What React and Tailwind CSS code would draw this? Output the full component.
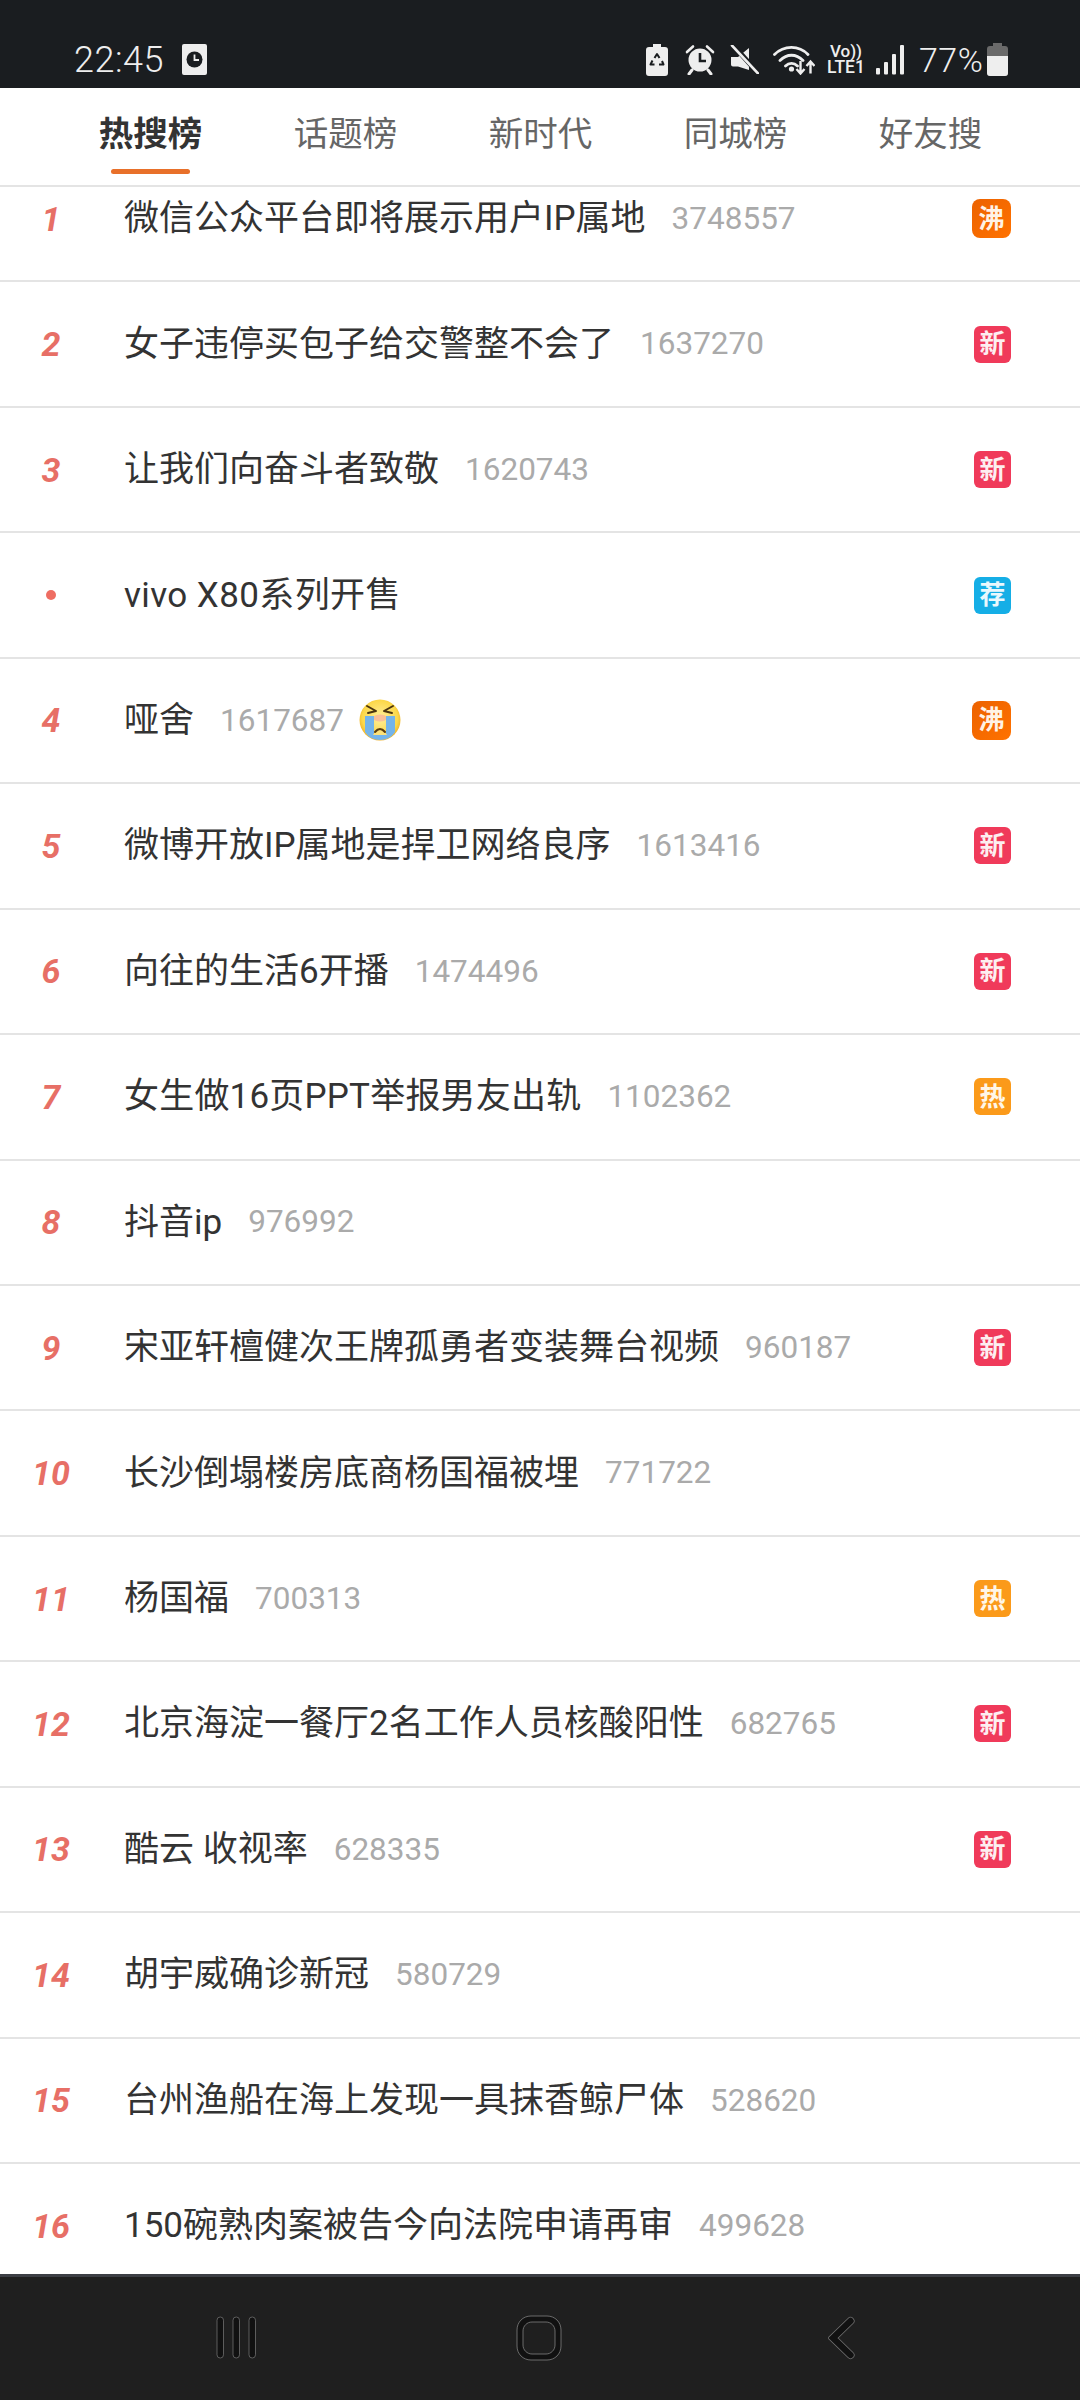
const CJK = '"Roboto","Noto Sans CJK SC",sans-serif';

const rows = [
  ["1", "微信公众平台即将展示用户IP属地", "3748557", "沸"],
  ["2", "女子违停买包子给交警整不会了", "1637270", "新"],
  ["3", "让我们向奋斗者致敬", "1620743", "新"],
  ["•", "vivo X80系列开售", "", "荐", false, "tracking-[0.4px]"],
  ["4", "哑舍", "1617687", "沸", true],
  ["5", "微博开放IP属地是捍卫网络良序", "1613416", "新"],
  ["6", "向往的生活6开播", "1474496", "新"],
  ["7", "女生做16页PPT举报男友出轨", "1102362", "热", false, "tracking-[0.2px]"],
  ["8", "抖音ip", "976992", ""],
  ["9", "宋亚轩檀健次王牌孤勇者变装舞台视频", "960187", "新"],
  ["10", "长沙倒塌楼房底商杨国福被埋", "771722", ""],
  ["11", "杨国福", "700313", "热"],
  ["12", "北京海淀一餐厅2名工作人员核酸阳性", "682765", "新"],
  ["13", "酷云 收视率", "628335", "新"],
  ["14", "胡宇威确诊新冠", "580729", ""],
  ["15", "台州渔船在海上发现一具抹香鲸尸体", "528620", ""],
  ["16", "150碗熟肉案被告今向法院申请再审", "499628", ""],
];

const tabs = ["热搜榜", "话题榜", "新时代", "同城榜", "好友搜"];

function Badge({ t }) {
  if (t === "沸")
    return <span className="flex h-[39px] w-[39px] items-center justify-center rounded-lg bg-gradient-to-br from-[#ec6200] to-[#ff7200] text-[26px] font-bold leading-none text-[#fff3e6]">沸</span>;
  if (t === "新")
    return <span className="flex h-[37px] w-[37px] items-center justify-center rounded-md bg-[#f03a5a] text-[26px] font-bold leading-none text-[#fdeef0]">新</span>;
  if (t === "荐")
    return <span className="flex h-[37px] w-[37px] items-center justify-center rounded-md bg-[#15aee6] text-[26px] font-bold leading-none text-[#eaf8fd]">荐</span>;
  return <span className="flex h-[37px] w-[37px] items-center justify-center rounded-md bg-[#fb9a1a] text-[26px] font-bold leading-none text-[#fff6e8]">热</span>;
}

function CryEmoji() {
  return (
    <svg width="42" height="42" viewBox="0 0 42 42" className="ml-[15px] shrink-0">
      <defs>
        <radialGradient id="face" cx="50%" cy="45%" r="55%">
          <stop offset="0%" stopColor="#ffef9c" />
          <stop offset="78%" stopColor="#fcd84a" />
          <stop offset="100%" stopColor="#eeb02a" />
        </radialGradient>
      </defs>
      <circle cx="21" cy="21" r="20.500" fill="url(#face)" />
      <ellipse cx="21" cy="19" rx="7" ry="3.500" fill="#f8b09a" opacity="0.75" />
      <path d="M6 17 H15 L15 35 H27 L27 17 H36 L36 33 Q31 41 21 41 Q11 41 6 33Z" fill="#74b4ea" />
      <path d="M14 36 Q21 25 28 36 Z" fill="#fde278" />
      <path d="M16 33 Q21 27 26 33" fill="none" stroke="#5a3d10" strokeWidth="2" strokeLinecap="round" />
      <path d="M8 7 L17 12 L9 14 M34 7 L25 12 L33 14" fill="none" stroke="#4a3410" strokeWidth="2" strokeLinecap="round" strokeLinejoin="round" />
    </svg>
  );
}

function Row({ rank, title, num, badge, emoji, extra }) {
  const dot = rank === "•";
  return (
    <div className="flex h-[125.45px] items-center border-b-2 border-[#e4e4e4]">
      <div className="flex w-[102px] shrink-0 justify-center">
        {dot ? (
          <span className="h-[10px] w-[10px] rounded-full bg-[#ee6d62]" />
        ) : (
          <span className="text-[34px] font-bold italic leading-none text-[#e76f66]">{rank}</span>
        )}
      </div>
      <div className="ml-[22px] flex min-w-0 flex-1 items-center">
        <span className={"whitespace-nowrap text-[35px] leading-none text-[#333333] " + (extra || "")}>{title}</span>
        {num && <span className="ml-[26px] text-[31.500px] leading-none text-[#aaaaaa]">{num}</span>}
        {emoji && <CryEmoji />}
      </div>
      <div className="mr-[69px] flex w-[39px] shrink-0 justify-end">{badge && <Badge t={badge} />}</div>
    </div>
  );
}

function StatusIcons() {
  const c = "#eeeeee";
  return (
    <div className="ml-auto flex items-center pr-[72px]">
      {/* battery saver */}
      <svg width="22" height="32" viewBox="0 0 22 32">
        <path d="M7 0h8v3h4a3 3 0 0 1 3 3v23a3 3 0 0 1-3 3H3a3 3 0 0 1-3-3V6a3 3 0 0 1 3-3h4z" fill={c} />
        <path d="M8.500 14l2.500-4 2.500 4M16 17l1.500 3.500H13M8.500 20.500H4.500L6.500 16.500" fill="none" stroke="#1a1d20" strokeWidth="2" strokeLinejoin="round" />
      </svg>
      {/* alarm */}
      <svg width="30" height="31" viewBox="0 0 30 31" className="ml-[17px]">
        <circle cx="15" cy="16" r="11.500" fill={c} />
        <path d="M15 9v8h6" fill="none" stroke="#1a1d20" strokeWidth="2.600" />
        <path d="M2 8l6-5.500M28 8l-6-5.500" stroke={c} strokeWidth="2.600" strokeLinecap="round" />
        <path d="M7 26l-3 4M23 26l3 4" stroke={c} strokeWidth="3" strokeLinecap="round" />
      </svg>
      {/* mute */}
      <svg width="29" height="29" viewBox="0 0 29 29" className="ml-[15px]">
        <path d="M0 10h7l11-9v22L7 19.500H2a2 2 0 0 1-2-2z" fill={c} transform="translate(1 2)" />
        <path d="M3 0l25 28" stroke="#1a1d20" strokeWidth="5" />
        <path d="M2 0.500l26 28" stroke={c} strokeWidth="2.600" strokeLinecap="round" />
      </svg>
      {/* wifi */}
      <svg width="42" height="31" viewBox="0 0 42 31" className="ml-[14px]">
        <path d="M1.500 10.500C11 1 26 1 35 10.500M7 16.500C14 9.500 23 9.500 30 16.500M12.500 22C16 18.500 21 18.500 24.500 22" fill="none" stroke={c} strokeWidth="2.800" strokeLinecap="round" />
        <circle cx="18.500" cy="25" r="2.600" fill={c} />
        <path d="M27.500 17v12M23.500 25l4 4.500 4-4.500M37.500 29.500V18M33.500 22l4-4.500 4 4.500" fill="none" stroke={c} strokeWidth="2.400" />
      </svg>
      {/* VoLTE */}
      <div className="ml-[11px] flex w-[40px] flex-col items-center font-medium text-[#eeeeee]">
        <span className="text-[17px] leading-[16px]">Vo))</span>
        <span className="text-[17.500px] leading-[17px]">LTE1</span>
      </div>
      {/* signal */}
      <svg width="28" height="30" viewBox="0 0 28 30" className="ml-[10px]">
        <rect x="0" y="23" width="4" height="6.500" rx="1" fill={c} />
        <rect x="8" y="17" width="4" height="12.500" rx="1" fill={c} />
        <rect x="16" y="9" width="4" height="20.500" rx="1" fill={c} />
        <rect x="24" y="0" width="4" height="29.500" rx="1" fill={c} />
      </svg>
      <span className="ml-[15px] w-[64px] whitespace-nowrap text-[34px] font-light leading-none tracking-[0.5px] text-[#eeeeee]">77%</span>
      {/* battery */}
      <svg width="21" height="33" viewBox="0 0 21 33" className="ml-[4px]">
        <path d="M6 0h9v3h3a3 3 0 0 1 3 3v24a3 3 0 0 1-3 3H3a3 3 0 0 1-3-3V6a3 3 0 0 1 3-3h3z" fill="#6a6a6a" />
        <path d="M0 13h21v17a3 3 0 0 1-3 3H3a3 3 0 0 1-3-3z" fill={c} />
      </svg>
    </div>
  );
}

export default function App() {
  return (
    <div className="flex h-[2400px] w-[1080px] flex-col overflow-hidden bg-white" style={{ fontFamily: CJK }}>
      <div className="flex h-[88px] shrink-0 items-center bg-[#1a1d20] pl-[74px] pt-[31px]">
        <span className="w-[89px] whitespace-nowrap text-[36px] font-light leading-none tracking-[0.5px] text-[#eeeeee]">22:45</span>
        <svg width="25" height="31" viewBox="0 0 25 31" className="ml-[19px]">
          <rect width="25" height="31" rx="2" fill="#eeeeee" />
          <circle cx="12.500" cy="15.500" r="8" fill="#1a1d20" />
          <path d="M12.500 10.500v5.500h4.500" fill="none" stroke="#eeeeee" strokeWidth="1.800" />
        </svg>
        <StatusIcons />
      </div>

      <div className="relative z-10 flex h-[99px] shrink-0 border-b-2 border-[#e4e4e4] bg-white pl-[53px]">
        {tabs.map((t, i) => (
          <div key={t} className="relative flex w-[195px] justify-center pt-[24px]">
            <span className={i === 0 ? "text-[34.500px] font-bold leading-[44px] text-[#333333]" : "text-[34.500px] leading-[44px] text-[#666666]"}>{t}</span>
            {i === 0 && <span className="absolute bottom-[11px] left-[58px] h-[5px] w-[79px] rounded-full bg-[#e8702a]" />}
          </div>
        ))}
      </div>

      <div className="min-h-0 flex-1 overflow-hidden">
        <div className="-mt-[30px]">
          {rows.map((r) => (
            <Row key={r[0] + r[1]} rank={r[0]} title={r[1]} num={r[2]} badge={r[3]} emoji={r[4]} extra={r[5]} />
          ))}
        </div>
      </div>

      <div className="flex h-[126px] shrink-0 items-start border-t-[3px] border-[#3c3e44] bg-[#1f1f1f]">
        <svg width="41" height="44" viewBox="0 0 41 44" className="ml-[216px] mt-[39px]">
          {[4, 20, 36].map((x) => (
            <rect key={x} x={x - 3} y="1" width="6.500" height="41" rx="3.200" fill="#111111" stroke="#707070" strokeWidth="0.800" />
          ))}
        </svg>
        <svg width="46" height="46" viewBox="0 0 46 46" className="ml-[259px] mt-[38px]">
          <path fillRule="evenodd" d="M15 1h16c8 0 14 6 14 14v16c0 8-6 14-14 14H15C7 45 1 39 1 31V15C1 7 7 1 15 1zM16 7C11 7 7 11 7 16v14c0 5 4 9 9 9h14c5 0 9-4 9-9V16c0-5-4-9-9-9z" fill="#111111" stroke="#808080" strokeWidth="0.800" />
        </svg>
        <svg width="28" height="44" viewBox="0 0 28 44" className="ml-[266px] mt-[39px]">
          <path d="M22.500 5 L5 22 L22.500 39" fill="none" stroke="#707070" strokeWidth="8" strokeLinecap="round" strokeMiterlimit="3" />
          <path d="M22.500 5 L5 22 L22.500 39" fill="none" stroke="#111111" strokeWidth="6.400" strokeLinecap="round" strokeMiterlimit="3" />
        </svg>
      </div>
    </div>
  );
}
